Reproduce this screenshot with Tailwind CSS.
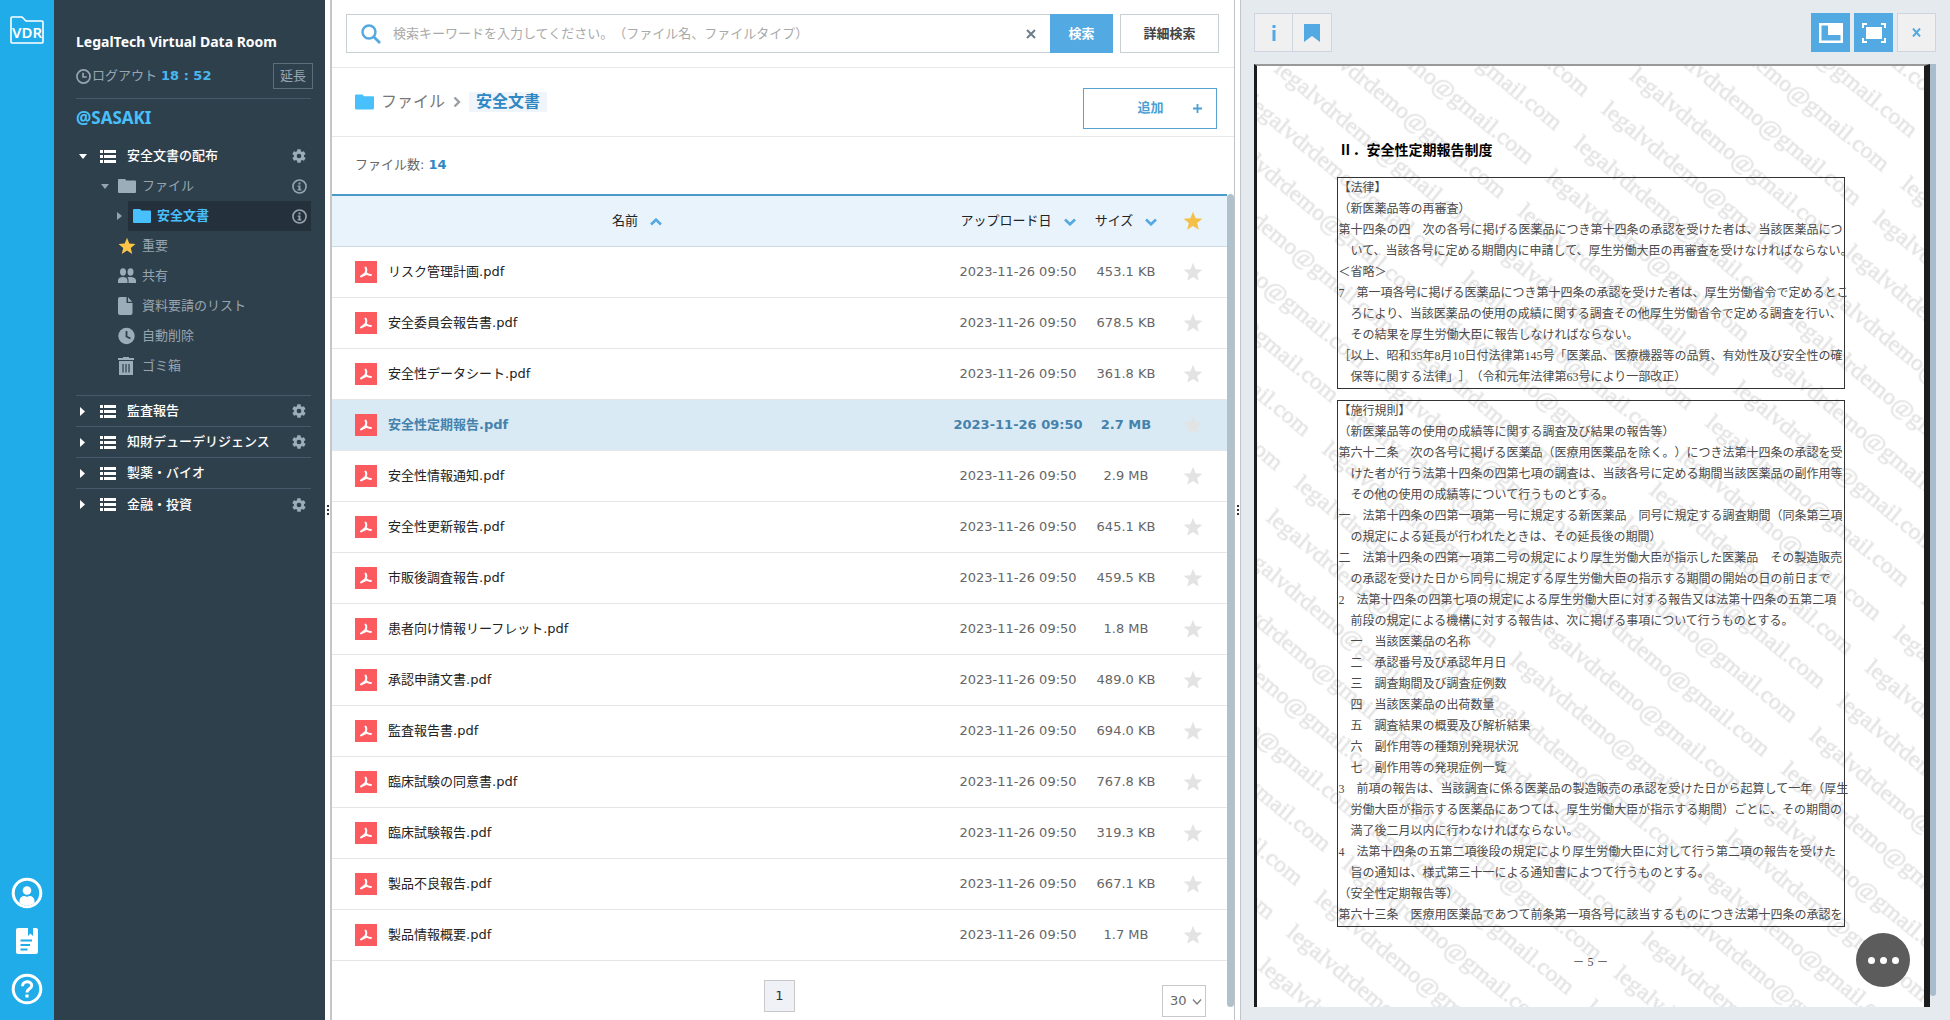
<!DOCTYPE html>
<html lang="ja">
  <head>
    <meta charset="UTF-8" />
    <meta name="viewport" content="width=device-width, initial-scale=1.0" />
    <title>LegalTech Virtual Data Room</title>
    <script src="https://cdn.jsdelivr.net/npm/@tailwindcss/browser@4"></script>
  </head>

  <body
    class="flex h-screen overflow-hidden bg-white font-['DejaVu_Sans','Noto_Sans_CJK_JP',sans-serif] text-[13px] text-[#333] [text-spacing-trim:space-all]"
  >
    <!-- Shared icons -->
    <svg class="hidden">
      <symbol id="list" viewBox="0 0 16 13">
        <path d="M0 0h3v3H0zM4 0h12v3H4zM0 5h3v3H0zM4 5h12v3H4zM0 10h3v3H0zM4 10h12v3H4z" />
      </symbol>
      <symbol id="gear" viewBox="0 0 24 24">
        <path
          d="M19.4 13c0-.3.1-.6.1-1s0-.7-.1-1l2.1-1.7c.2-.1.3-.4.1-.6l-2-3.5c-.1-.2-.4-.3-.6-.2l-2.5 1c-.5-.4-1.1-.7-1.7-1L14.4 2.4c0-.2-.2-.4-.5-.4h-4c-.2 0-.4.2-.5.4L9 5c-.6.3-1.2.6-1.7 1l-2.5-1c-.2-.1-.5 0-.6.2l-2 3.500c-.1.2-.1.5.1.6L4.500 11c0 .3-.1.7-.1 1s0 .7.1 1l-2.100 1.700c-.2.1-.2.4-.1.6l2 3.500c.1.2.4.3.6.2l2.500-1c.5.4 1.100.7 1.700 1l.4 2.600c0 .2.2.4.5.4h4c.2 0 .5-.2.5-.4l.4-2.600c.6-.3 1.200-.6 1.700-1l2.500 1c.2.1.5 0 .6-.2l2-3.500c.1-.2.1-.5-.1-.6zM12 15.500a3.500 3.500 0 1 1 0-7 3.500 3.500 0 0 1 0 7z"
        />
      </symbol>
      <symbol id="info" viewBox="0 0 16 16">
        <circle cx="8" cy="8" r="7" fill="none" stroke="currentColor" stroke-width="1.7" />
        <path d="M7 3.800h2v2H7zM6 7h3v4h1v1.300H6V11h1V8.300H6z" />
      </symbol>
      <symbol id="folder" viewBox="0 0 18 14">
        <path d="M0 1Q0 0 1 0h6l1.500 1.500H17Q18 1.500 18 2.500V13Q18 14 17 14H1Q0 14 0 13z" />
      </symbol>
      <symbol id="star" viewBox="0 0 24 24">
        <path d="M12 1l3.100 7.600 8.200.6-6.300 5.300 2 8L12 18.100 5 22.500l2-8L.7 9.200l8.200-.6z" />
      </symbol>
      <symbol id="down" viewBox="0 0 12 8">
        <path d="M1 1.500L6 6.300l5-4.800" fill="none" stroke="currentColor" stroke-width="2.600" />
      </symbol>
      <symbol id="pdf" viewBox="0 0 22 22">
        <path
          d="M10.500 6.500c1.200 1.500.7 4 0 5.500L6 15.500M6 15.300l5-2.300M10.800 11.800c1.200 1.500 3 2.200 5.200 2.100"
          fill="none"
          stroke="currentColor"
          stroke-width="2"
          stroke-linecap="round"
          stroke-linejoin="round"
        />
      </symbol>
    </svg>

    <!-- Icon rail -->
    <nav class="flex w-[54px] shrink-0 flex-col items-center justify-between bg-[#20ace8] pt-4 pb-[15px] text-white">
      <a href="#" aria-label="VDR">
        <svg class="h-7 w-[34px]" viewBox="0 0 34 28">
          <path d="M1 2Q1 1 2 1h10l4 4h16q1 0 1 1v20q0 1-1 1H2q-1 0-1-1z" fill="none" stroke="currentColor" stroke-width="1.600" />
          <text x="17" y="22" text-anchor="middle" font-family="Noto Sans" font-size="15" font-weight="600" fill="currentColor">VDR</text>
        </svg>
      </a>
      <div class="flex flex-col items-center gap-4">
        <a href="#" aria-label="アカウント">
          <svg class="size-8" viewBox="0 0 32 32" fill="currentColor">
            <circle cx="16" cy="16" r="13.800" fill="none" stroke="currentColor" stroke-width="3" />
            <circle cx="16" cy="13.500" r="4.300" />
            <path d="M8.500 26v-1.500c0-4 2.500-5.500 5-5.500q2.500 1.500 5 0c2.500 0 5 1.500 5 5.500V26q-7.500 5-15 0z" />
          </svg>
        </a>
        <a href="#" aria-label="レポート">
          <svg class="h-8 w-6" viewBox="0 0 24 32">
            <path d="M3 3h10v8l2.500-2.500L18 11V3h3q2 0 2 2v22q0 2-2 2H3q-2 0-2-2V5q0-2 2-2z" fill="currentColor" />
            <path d="M5.500 15.500h11.500M5.500 20h9.500M5.500 24.500h7" stroke="#20ace8" stroke-width="1.800" />
          </svg>
        </a>
        <a href="#" aria-label="ヘルプ">
          <svg class="size-8" viewBox="0 0 32 32" fill="none" stroke="currentColor">
            <circle cx="16" cy="16" r="13.800" stroke-width="3" />
            <path d="M11.500 13.200c0-6 9.200-5.800 9.200-.7 0 3.500-4.700 3.200-4.700 7" stroke-width="3" />
            <path d="M16 21.500v3" stroke-width="3.200" />
          </svg>
        </a>
      </div>
    </nav>

    <!-- Sidebar -->
    <aside class="w-[271px] shrink-0 bg-[#2f404d] pt-7 pr-3.5 pl-[22px] text-[#97a5b0]">
      <h1 class="font-['Noto_Sans',sans-serif] text-sm leading-7 font-bold whitespace-nowrap text-white">
        LegalTech Virtual Data Room
      </h1>
      <div class="mt-[7px] flex items-center border-b border-[#47596a] pb-[9px] leading-6">
        <svg class="mr-px size-[15px]" viewBox="0 0 16 16" fill="none" stroke="currentColor" stroke-width="1.800">
          <circle cx="8" cy="8" r="7" />
          <path d="M7.500 4v4.500h4" />
        </svg>
        <span>ログアウト</span>
        <span class="ml-1 font-bold whitespace-nowrap text-[#49b7ec]">18 : 52</span>
        <button class="-mr-0.5 ml-auto h-[26px] border border-[#5d6d79] px-1.5 leading-6">延長</button>
      </div>
      <p class="pt-1.5 font-['Noto_Sans',sans-serif] text-[17px] leading-[26px] font-bold text-[#48c0fb]">@SASAKI</p>

      <ul class="border-b border-[#47596a] pt-2.5 pb-3.5 leading-[30px]">
        <li class="flex items-center pr-1 pl-[3px] font-medium text-white">
          <svg class="mr-[13px] h-[5px] w-2" viewBox="0 0 8 5" fill="currentColor"><path d="M0 0h8L4 5z" /></svg>
          <svg class="mr-[11px] h-[13px] w-4" fill="currentColor"><use href="#list" /></svg>
          <a href="#">安全文書の配布</a>
          <svg class="ml-auto size-4 text-[#9badb9]" fill="currentColor"><use href="#gear" /></svg>
        </li>
        <li class="flex items-center pr-1 pl-[25px]">
          <svg class="mr-[9px] h-[5px] w-2" viewBox="0 0 8 5" fill="currentColor"><path d="M0 0h8L4 5z" /></svg>
          <svg class="mr-1.5 h-3.5 w-[18px] text-[#9badb9]" fill="currentColor"><use href="#folder" /></svg>
          <a href="#">ファイル</a>
          <svg class="ml-auto size-[15px]" fill="currentColor"><use href="#info" /></svg>
        </li>
        <li class="flex items-center pl-[41px]">
          <svg class="mr-1.5 h-2 w-[5px]" viewBox="0 0 5 8" fill="currentColor"><path d="M0 0v8l5-4z" /></svg>
          <div class="flex grow items-center bg-[#24313d] pr-1 pl-[5px]">
            <svg class="mr-1.5 h-3.5 w-[18px] text-[#48c0fb]" fill="currentColor"><use href="#folder" /></svg>
            <a href="#" class="font-bold text-[#48c0fb]">安全文書</a>
            <svg class="ml-auto size-[15px]" fill="currentColor"><use href="#info" /></svg>
          </div>
        </li>
        <li class="flex items-center gap-1.5 pl-[42px]">
          <svg class="size-[18px] text-[#fbc548]" fill="currentColor"><use href="#star" /></svg>
          <a href="#">重要</a>
        </li>
        <li class="flex items-center gap-1.5 pl-[42px]">
          <svg class="size-[18px] text-[#9badb9]" viewBox="0 0 18 18" fill="currentColor">
            <ellipse cx="5" cy="5" rx="3" ry="3.700" />
            <ellipse cx="12.500" cy="5" rx="3" ry="3.700" />
            <path d="M0 16v-2.500C0 11 2.500 10 5 10s4.500 1 4.500 3.500V16zM10.500 16v-3c0-1.200-.5-2-1.200-2.600 3-1 8.700-.4 8.700 3.100V16z" />
          </svg>
          <a href="#">共有</a>
        </li>
        <li class="flex items-center gap-1.5 pl-[42px]">
          <svg class="size-[18px] text-[#9badb9]" viewBox="0 0 18 18" fill="currentColor">
            <path d="M0 2Q0 0 2 0h6.500v6h6v10q0 2-2 2H2q-2 0-2-2zM10 .3L14.200 4.700H10z" />
          </svg>
          <a href="#">資料要請のリスト</a>
        </li>
        <li class="flex items-center gap-1.5 pl-[42px]">
          <svg class="size-[18px]" viewBox="0 0 18 18">
            <circle cx="8.500" cy="9" r="8.200" fill="#9badb9" />
            <path d="M8.500 4v5.500l4 2" fill="none" stroke="#2f404d" stroke-width="1.800" />
          </svg>
          <a href="#">自動削除</a>
        </li>
        <li class="flex items-center gap-1.5 pl-[42px]">
          <svg class="size-[18px]" viewBox="0 0 18 18">
            <path d="M0 1h5V0h6v1h5v2H0zM1 4h14v14H1z" fill="#9badb9" />
            <path d="M5 7v8.500M8 7v8.500M11 7v8.500" stroke="#2f404d" stroke-width="1.200" />
          </svg>
          <a href="#">ゴミ箱</a>
        </li>
      </ul>

      <ul class="divide-y divide-[#47596a] font-medium text-white">
        <li class="flex h-[31px] items-center pr-1 pl-1">
          <svg class="mr-[15px] h-[9px] w-[5px]" viewBox="0 0 5 9" fill="currentColor"><path d="M0 0v9l5-4.500z" /></svg>
          <svg class="mr-[11px] h-[13px] w-4" fill="currentColor"><use href="#list" /></svg>
          <a href="#">監査報告</a>
          <svg class="ml-auto size-4 text-[#9badb9]" fill="currentColor"><use href="#gear" /></svg>
        </li>
        <li class="flex h-[31px] items-center pr-1 pl-1">
          <svg class="mr-[15px] h-[9px] w-[5px]" viewBox="0 0 5 9" fill="currentColor"><path d="M0 0v9l5-4.500z" /></svg>
          <svg class="mr-[11px] h-[13px] w-4" fill="currentColor"><use href="#list" /></svg>
          <a href="#">知財デューデリジェンス</a>
          <svg class="ml-auto size-4 text-[#9badb9]" fill="currentColor"><use href="#gear" /></svg>
        </li>
        <li class="flex h-[31px] items-center pr-1 pl-1">
          <svg class="mr-[15px] h-[9px] w-[5px]" viewBox="0 0 5 9" fill="currentColor"><path d="M0 0v9l5-4.500z" /></svg>
          <svg class="mr-[11px] h-[13px] w-4" fill="currentColor"><use href="#list" /></svg>
          <a href="#">製薬・バイオ</a>
        </li>
        <li class="flex h-[31px] items-center pr-1 pl-1">
          <svg class="mr-[15px] h-[9px] w-[5px]" viewBox="0 0 5 9" fill="currentColor"><path d="M0 0v9l5-4.500z" /></svg>
          <svg class="mr-[11px] h-[13px] w-4" fill="currentColor"><use href="#list" /></svg>
          <a href="#">金融・投資</a>
          <svg class="ml-auto size-4 text-[#9badb9]" fill="currentColor"><use href="#gear" /></svg>
        </li>
      </ul>
    </aside>

    <!-- Splitter -->
    <div class="flex w-[7px] shrink-0 flex-col items-center justify-center gap-0.5 border-r-2 border-[#c4c6c8]">
      <span class="size-0.5 bg-[#333]"></span>
      <span class="size-0.5 bg-[#333]"></span>
      <span class="size-0.5 bg-[#333]"></span>
    </div>

    <!-- File list -->
    <main class="flex min-w-0 grow flex-col">
      <form class="flex h-[68px] shrink-0 items-center border-b border-[#e6e8ea] pr-[15px] pl-3.5">
        <div class="flex h-[39px] grow items-center border border-r-0 border-[#c9d0d4] pl-3.5">
          <svg class="size-5 text-[#55a8e0]" viewBox="0 0 20 20" fill="none" stroke="currentColor">
            <circle cx="8" cy="8" r="6.500" stroke-width="2.400" />
            <path d="M12.700 12.700L19 19" stroke-width="2.800" />
          </svg>
          <input
            type="text"
            aria-label="検索キーワード"
            class="ml-3 min-w-0 grow outline-none placeholder:text-[#a9a9a9]"
            placeholder="検索キーワードを入力してください。（ファイル名、ファイルタイプ）"
          />
          <button type="button" aria-label="クリア" class="px-3.5 text-[#6d7c8b]">
            <svg class="size-2.5" viewBox="0 0 10 10"><path d="M1 1l8 8M9 1L1 9" stroke="currentColor" stroke-width="2" /></svg>
          </button>
        </div>
        <button type="button" class="h-[39px] w-[63px] bg-[#53a9e1] font-bold text-white">検索</button>
        <button type="button" class="ml-[7px] h-[39px] w-[99px] border border-[#c9d0d4] font-bold text-[#444]">詳細検索</button>
      </form>

      <div class="flex h-[69px] shrink-0 items-center border-b border-[#e6e8ea] pr-[17px] pl-[23px] text-base">
        <svg class="mr-[7px] h-4 w-[19px] text-[#48c0fb]" fill="currentColor"><use href="#folder" /></svg>
        <a href="#" class="text-[#777]">ファイル</a>
        <svg class="mx-2 h-3 w-2 text-[#9a9fa5]" viewBox="0 0 8 12"><path d="M1.500 1.500L6 6l-4.500 4.500" fill="none" stroke="currentColor" stroke-width="2.400" /></svg>
        <a href="#" class="bg-[#eff5fb] px-[7px] leading-5 font-bold text-[#2f88c4]">安全文書</a>
        <button class="mt-3 ml-auto flex h-[41px] w-[134px] items-center border border-[#56a3ce] px-3.5 text-[13px] font-bold text-[#4a9fd5]">
          <span class="grow pl-2.5 text-center">追加</span>
          <svg class="size-[9px]" viewBox="0 0 9 9"><path d="M4.500 0v9M0 4.500h9" stroke="currentColor" stroke-width="1.800" /></svg>
        </button>
      </div>

      <p class="flex h-[57px] shrink-0 items-center pb-0.5 pl-[23px] text-[#666]">
        ファイル数:&nbsp;<b class="text-[#2f88c4]">14</b>
      </p>

      <div class="flex min-h-0 grow">
        <div class="min-w-0 grow">
          <table class="w-full table-fixed border-collapse text-center">
            <colgroup>
              <col />
              <col class="w-[152px]" />
              <col class="w-16" />
              <col class="w-[69px]" />
            </colgroup>
            <thead class="border-t-2 border-b border-t-[#4b9ccb] border-b-[#cddbe4] bg-[#e8f3fc] text-[#222]">
              <tr class="h-[51px] whitespace-nowrap">
                <th class="font-normal">名前<svg class="ml-3 inline h-2 w-3 rotate-180 text-[#55a8e0]"><use href="#down" /></svg></th>
                <th class="font-normal">アップロード日<svg class="ml-3 inline h-2 w-3 text-[#55a8e0]"><use href="#down" /></svg></th>
                <th class="font-normal">サイズ<svg class="ml-3 inline h-2 w-3 text-[#55a8e0]"><use href="#down" /></svg></th>
                <th><svg class="mx-auto size-5 text-[#f5c04a]" fill="currentColor" aria-label="重要"><use href="#star" /></svg></th>
              </tr>
            </thead>
            <tbody id="fileTable"></tbody>
          </table>
          <div class="flex items-start justify-between pt-[19px] pr-[21px] pl-[432px]">
            <button class="h-8 w-[31px] border border-[#c8c8c8] bg-[#eff1f6] text-[#333]">1</button>
            <div class="relative mt-[5px]">
              <select aria-label="表示件数" class="h-8 w-11 appearance-none border border-[#c8c8c8] pl-[7px] text-[#666]">
                <option>30</option>
              </select>
              <svg class="pointer-events-none absolute top-3.5 right-1 h-1.5 w-2.5" viewBox="0 0 10 6" fill="none" stroke="#777"><path d="M1 .5L5 5 9 .5" stroke-width="1.200" /></svg>
            </div>
          </div>
        </div>
        <div class="mb-[13px] w-[7px] shrink-0 rounded-t rounded-b bg-[#b1c1cc]"></div>
      </div>
    </main>

    <!-- Splitter -->
    <div class="flex w-[7px] shrink-0 flex-col items-center justify-center gap-0.5 border-x border-[#c0c4c8]">
      <span class="size-0.5 bg-[#333]"></span>
      <span class="size-0.5 bg-[#333]"></span>
      <span class="size-0.5 bg-[#333]"></span>
    </div>

    <!-- Preview -->
    <section class="flex w-[709px] shrink-0 flex-col bg-[#e5eaef] pt-[13px] pr-3.5 pb-[13px] pl-[13px]">
      <div class="flex h-[39px] shrink-0 text-[#53a9e1]">
        <button aria-label="情報" class="flex w-[39px] items-center justify-center border border-[#cfd4e0] bg-[#f0f0f0]">
          <svg class="h-4 w-1" viewBox="0 0 4 16" fill="currentColor"><path d="M.5 0h3v3h-3zM.5 5h3v11h-3z" /></svg>
        </button>
        <button aria-label="ブックマーク" class="flex w-[39px] items-center justify-center border border-l-0 border-[#cfd4e0] bg-[#f0f0f0]">
          <svg class="h-[18px] w-4" viewBox="0 0 16 18" fill="currentColor"><path d="M0 0h16v18l-8-6-8 6z" /></svg>
        </button>
        <button aria-label="分割表示" class="ml-auto flex w-[39px] items-center justify-center bg-[#53a9e1] text-white">
          <svg class="h-5 w-6" viewBox="0 0 24 20"><path d="M0 0h24v20H0z" fill="currentColor" /><path d="M2.500 2.500h6.500v9.500h12.500v5.500h-19z" fill="#53a9e1" /></svg>
        </button>
        <button aria-label="全画面" class="ml-1 flex w-[39px] items-center justify-center bg-[#53a9e1] text-white">
          <svg class="h-5 w-6" viewBox="0 0 24 20"><path d="M4 4h16v12H4z" fill="currentColor" /><path d="M1 5V1h4M19 1h4v4M23 15v4h-4M5 19H1v-4" fill="none" stroke="currentColor" stroke-width="2" /></svg>
        </button>
        <button aria-label="閉じる" class="ml-1 flex w-[39px] items-center justify-center border border-[#cfd4e0] bg-[#f0f0f0]">
          <svg class="size-[9px]" viewBox="0 0 9 9"><path d="M1 .5l7 8M8 .5l-7 8" stroke="currentColor" stroke-width="2" /></svg>
        </button>
      </div>

      <div class="mt-3 flex min-h-0 grow">
        <div class="relative grow overflow-hidden border-t-2 border-r-[6px] border-l-[3px] border-t-[#999] border-r-[#1c1c1c] border-l-[#1c1c1c] bg-white">
          <svg class="absolute inset-0 h-full w-full" aria-hidden="true">
            <pattern id="watermark" width="279" height="44" patternUnits="userSpaceOnUse" patternTransform="translate(385 -8) rotate(39.400)">
              <text x="2" y="24" font-family="Liberation Serif" font-size="24" fill="#e4e4e4" stroke="#e4e4e4" stroke-width=".5">legalvdrdemo@gmail.com</text>
            </pattern>
            <rect width="100%" height="100%" fill="url(#watermark)" />
          </svg>
          <article class="relative mx-auto w-[508px] pt-[73px] font-['Liberation_Serif','Noto_Sans_CJK_JP',serif] text-[12px] leading-[21px] whitespace-nowrap text-[#4a4a4a]">
            <h2 class="px-0.5 text-[14px] leading-6 font-bold text-black">Ⅱ．安全性定期報告制度</h2>
            <div class="mt-3.5 border border-[#333] pl-px">
              <p>【法律】</p>
              <p>（新医薬品等の再審査）</p>
              <p>第十四条の四　次の各号に掲げる医薬品につき第十四条の承認を受けた者は、当該医薬品につ</p>
              <p>　いて、当該各号に定める期間内に申請して、厚生労働大臣の再審査を受けなければならない。</p>
              <p>＜省略＞</p>
              <p>7　第一項各号に掲げる医薬品につき第十四条の承認を受けた者は、厚生労働省令で定めるとこ</p>
              <p>　ろにより、当該医薬品の使用の成績に関する調査その他厚生労働省令で定める調査を行い、</p>
              <p>　その結果を厚生労働大臣に報告しなければならない。</p>
              <p>［以上、昭和35年8月10日付法律第145号「医薬品、医療機器等の品質、有効性及び安全性の確</p>
              <p>　保等に関する法律」］（令和元年法律第63号により一部改正）</p>
            </div>
            <div class="mt-[11px] border border-[#333] pl-px">
              <p>【施行規則】</p>
              <p>（新医薬品等の使用の成績等に関する調査及び結果の報告等）</p>
              <p>第六十二条　次の各号に掲げる医薬品（医療用医薬品を除く。）につき法第十四条の承認を受</p>
              <p>　けた者が行う法第十四条の四第七項の調査は、当該各号に定める期間当該医薬品の副作用等</p>
              <p>　その他の使用の成績等について行うものとする。</p>
              <p>一　法第十四条の四第一項第一号に規定する新医薬品　同号に規定する調査期間（同条第三項</p>
              <p>　の規定による延長が行われたときは、その延長後の期間）</p>
              <p>二　法第十四条の四第一項第二号の規定により厚生労働大臣が指示した医薬品　その製造販売</p>
              <p>　の承認を受けた日から同号に規定する厚生労働大臣の指示する期間の開始の日の前日まで</p>
              <p>2　法第十四条の四第七項の規定による厚生労働大臣に対する報告又は法第十四条の五第二項</p>
              <p>　前段の規定による機構に対する報告は、次に掲げる事項について行うものとする。</p>
              <p>　一　当該医薬品の名称</p>
              <p>　二　承認番号及び承認年月日</p>
              <p>　三　調査期間及び調査症例数</p>
              <p>　四　当該医薬品の出荷数量</p>
              <p>　五　調査結果の概要及び解析結果</p>
              <p>　六　副作用等の種類別発現状況</p>
              <p>　七　副作用等の発現症例一覧</p>
              <p>3　前項の報告は、当該調査に係る医薬品の製造販売の承認を受けた日から起算して一年（厚生</p>
              <p>　労働大臣が指示する医薬品にあつては、厚生労働大臣が指示する期間）ごとに、その期間の</p>
              <p>　満了後二月以内に行わなければならない。</p>
              <p>4　法第十四条の五第二項後段の規定により厚生労働大臣に対して行う第二項の報告を受けた</p>
              <p>　旨の通知は、様式第三十一による通知書によつて行うものとする。</p>
              <p>（安全性定期報告等）</p>
              <p>第六十三条　医療用医薬品であつて前条第一項各号に該当するものにつき法第十四条の承認を</p>
            </div>
            <p class="mt-[25px] text-center">－ 5 －</p>
          </article>
          <button aria-label="メニュー" class="absolute right-3.5 bottom-5 flex size-[54px] items-center justify-center gap-[5px] rounded-full bg-[#5c5c5c]">
            <span class="size-[7px] rounded-full bg-white"></span>
            <span class="size-[7px] rounded-full bg-white"></span>
            <span class="size-[7px] rounded-full bg-white"></span>
          </button>
        </div>
        <div class="mb-[11px] w-[6px] shrink-0 rounded-b bg-[#a9bccb]"></div>
      </div>
    </section>

    <script>
      const files = [
        ["リスク管理計画.pdf", "453.1 KB"],
        ["安全委員会報告書.pdf", "678.5 KB"],
        ["安全性データシート.pdf", "361.8 KB"],
        ["安全性定期報告.pdf", "2.7 MB"],
        ["安全性情報通知.pdf", "2.9 MB"],
        ["安全性更新報告.pdf", "645.1 KB"],
        ["市販後調査報告.pdf", "459.5 KB"],
        ["患者向け情報リーフレット.pdf", "1.8 MB"],
        ["承認申請文書.pdf", "489.0 KB"],
        ["監査報告書.pdf", "694.0 KB"],
        ["臨床試験の同意書.pdf", "767.8 KB"],
        ["臨床試験報告.pdf", "319.3 KB"],
        ["製品不良報告.pdf", "667.1 KB"],
        ["製品情報概要.pdf", "1.7 MB"],
      ];
      const selected = 3;

      document.getElementById("fileTable").innerHTML = files
        .map(([name, size], i) => {
          const row = i === selected ? "bg-[#d9eaf5] font-bold text-[#4682ab]" : "text-[#666]";
          const link = i === selected ? "text-[#4682ab]" : "text-[#222]";
          return `
            <tr class="h-[51px] border-b border-[#e4e6e8] whitespace-nowrap ${row}">
              <td>
                <a href="#" class="flex items-center pl-[23px] ${link}">
                  <svg class="mr-[11px] size-[22px] bg-[#fb5a5f] text-white"><use href="#pdf" /></svg>${name}
                </a>
              </td>
              <td>2023-11-26 09:50</td>
              <td>${size}</td>
              <td>
                <button aria-label="重要にする" class="align-middle text-[#e3e3e3]">
                  <svg class="size-5" fill="currentColor"><use href="#star" /></svg>
                </button>
              </td>
            </tr>`;
        })
        .join("");
    </script>
  </body>
</html>
